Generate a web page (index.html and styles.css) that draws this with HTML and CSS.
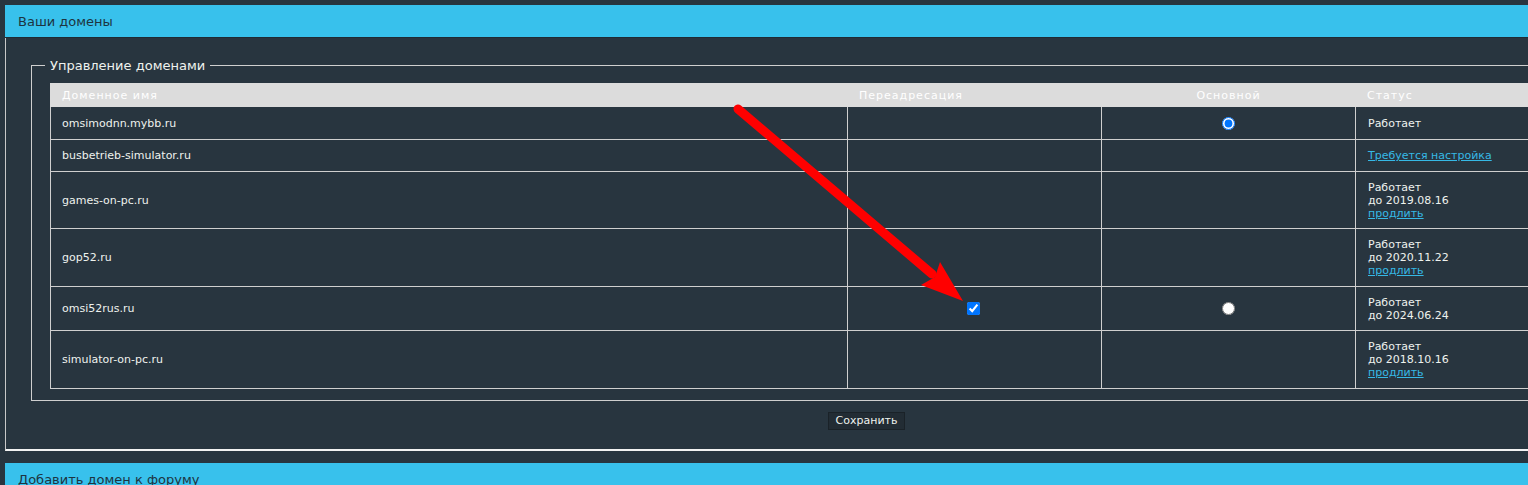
FILE: index.html
```html
<!DOCTYPE html>
<html lang="ru">
<head>
    <meta charset="UTF-8">
    <title>Ваши домены</title>
    <link rel="stylesheet" href="styles.css">
</head>
<body>
    <div class="page">
        <div class="block">
            <div class="block-title">Ваши домены</div>
            <div class="block-body">
                <fieldset class="domains">
                    <legend>Управление доменами</legend>
                    <table class="domain-table">
                        <colgroup>
                            <col class="col-name">
                            <col class="col-redirect">
                            <col class="col-main">
                            <col class="col-status">
                        </colgroup>
                        <thead>
                            <tr>
                                <th>Доменное имя</th>
                                <th>Переадресация</th>
                                <th class="center">Основной</th>
                                <th>Статус</th>
                            </tr>
                        </thead>
                        <tbody>
                            <tr class="row-a">
                                <td>omsimodnn.mybb.ru</td>
                                <td></td>
                                <td class="center"><input type="radio" name="main" checked></td>
                                <td>Работает</td>
                            </tr>
                            <tr class="row-b">
                                <td>busbetrieb-simulator.ru</td>
                                <td></td>
                                <td></td>
                                <td><a href="#">Требуется настройка</a></td>
                            </tr>
                            <tr class="row-c">
                                <td>games-on-pc.ru</td>
                                <td></td>
                                <td></td>
                                <td>Работает<br>до 2019.08.16<br><a href="#">продлить</a></td>
                            </tr>
                            <tr class="row-e">
                                <td>gop52.ru</td>
                                <td></td>
                                <td></td>
                                <td>Работает<br>до 2020.11.22<br><a href="#">продлить</a></td>
                            </tr>
                            <tr class="row-d">
                                <td>omsi52rus.ru</td>
                                <td class="center"><input class="redirect" type="checkbox" checked></td>
                                <td class="center"><input type="radio" name="main"></td>
                                <td>Работает<br>до 2024.06.24</td>
                            </tr>
                            <tr class="row-e">
                                <td>simulator-on-pc.ru</td>
                                <td></td>
                                <td></td>
                                <td>Работает<br>до 2018.10.16<br><a href="#">продлить</a></td>
                            </tr>
                        </tbody>
                    </table>
                </fieldset>
                <div class="actions">
                    <button type="button">Сохранить</button>
                </div>
            </div>
        </div>
        <div class="block">
            <div class="block-title">Добавить домен к форуму</div>
        </div>
    </div>

    <svg class="arrow" width="1528" height="485" viewBox="0 0 1528 485">
        <line x1="738" y1="109" x2="932" y2="274" stroke="#ff0000" stroke-width="9" stroke-linecap="round"/>
        <polygon points="963,301 921,285 935,277 940,262" fill="#ff0000"/>
    </svg>
</body>
</html>
```

FILE: styles.css
```css
body {
    margin: 0;
    background: #28353f;
    font-family: "DejaVu Sans", Verdana, sans-serif;
    color: #eef2ee;
    overflow: hidden;
}
.page {
    width: 1722px;
    padding: 5px 0 0 5px;
}
.block {
    margin-bottom: 12px;
}
.block-title {
    height: 30px;
    line-height: 30px;
    padding: 2px 0 0 13px;
    background: #38c1ec;
    color: #1d3441;
    font-size: 13px;
    border-bottom: 1px solid #1f2b34;
}
.block-body {
    border-left: 1px solid #c8c8c8;
    border-bottom: 2px solid #f2f2f2;
    padding: 20px 25px 19px 25px;
}
fieldset.domains {
    margin: 0;
    border: 1px solid #cfcfcf;
    padding: 10px 18px 11px 18px;
}
fieldset.domains legend {
    font-size: 13px;
    line-height: 15px;
    padding: 0 5px;
    margin-left: -5px;
    color: #eef2ee;
}
.domain-table {
    width: 100%;
    table-layout: fixed;
    border-collapse: collapse;
    font-size: 11px;
}
.col-name { width: 797px; }
.col-redirect { width: 254px; }
.col-main { width: 254px; }
.col-status { width: 327px; }
.domain-table th {
    height: 22px;
    padding: 0 11px;
    background: #dcdcdc;
    border: 1px solid #dcdcdc;
    color: #ffffff;
    font-weight: normal;
    letter-spacing: 1px;
    text-align: left;
}
.domain-table td {
    padding: 0 11px;
    border: 1px solid #cfcfcf;
    line-height: 13px;
    vertical-align: middle;
}
.domain-table td:last-child {
    padding-left: 12px;
}
.domain-table .center {
    text-align: center;
}
.row-a td { height: 32px; }
.row-b td { height: 31px; }
.row-c td { height: 56px; }
.row-d td { height: 43px; }
.row-e td { height: 57px; }
.domain-table input {
    margin: 0;
    vertical-align: middle;
}
.domain-table input.redirect {
    margin-right: 3px;
}
.domain-table a {
    color: #36b9e6;
}
.actions {
    display: flex;
    justify-content: center;
    margin-top: 11px;
}
button {
    font-family: "DejaVu Sans", Verdana, sans-serif;
    font-size: 11px;
    line-height: 14px;
    padding: 1px 7px;
    background: #222c34;
    color: #eef2ee;
    border: 1px solid #1a2228;
}
.arrow {
    position: absolute;
    top: 0;
    left: 0;
    pointer-events: none;
}
```
